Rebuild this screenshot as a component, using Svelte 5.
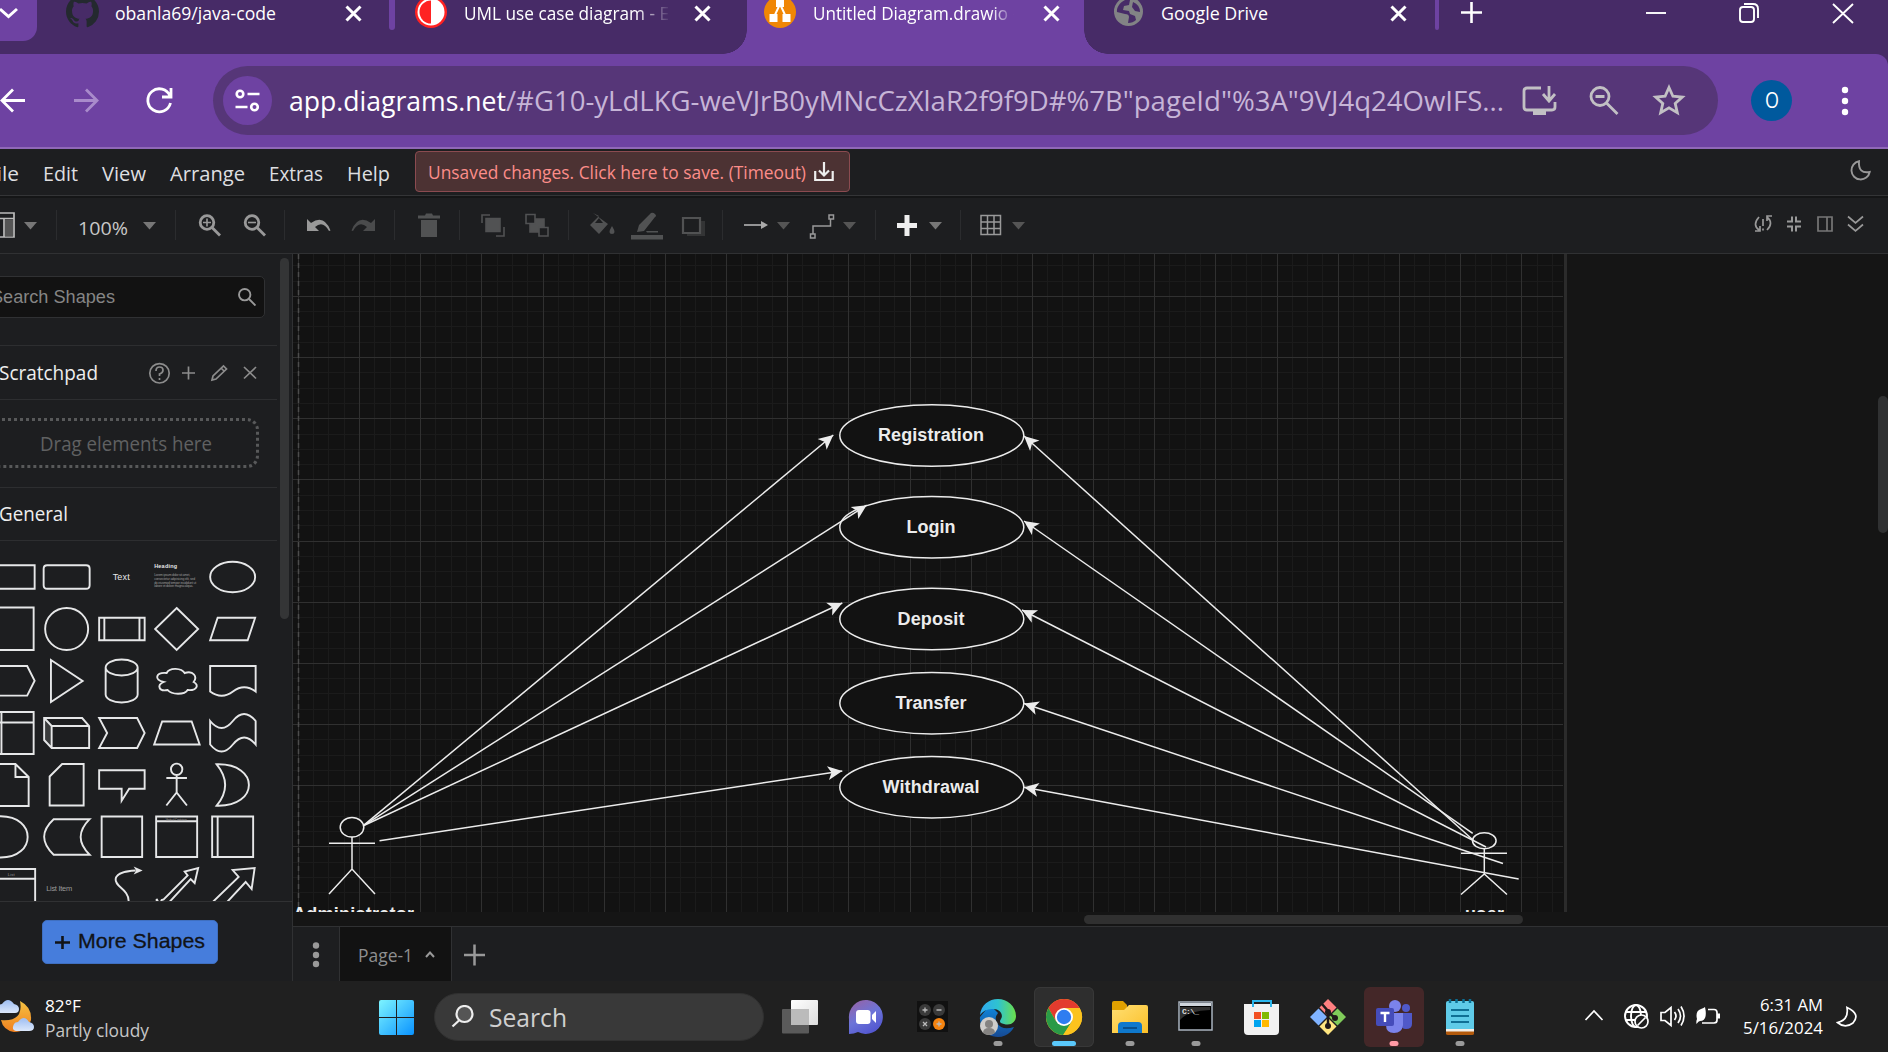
<script>
  const range = (start, end, step) => {
    const out = [];
    for (let v = start; v <= end; v += step) out.push(v);
    return out;
  };

  // Canvas grid: four minor cells per major cell
  const cell = 15.292;
  const columns = range(0, 82, 1)
    .map((i) => ({ at: Math.floor(298.35 + i * cell) + 0.5, major: i % 4 === 0 }))
    .filter((l) => l.at < 1563);
  const rows = range(0, 42, 1).map((i) => ({ at: Math.floor(296.2 - 3 * cell + 0.2 + i * cell) + 0.5, major: (i + 1) % 4 === 0 }));

  const useCases = [
    { name: 'Registration', y: 435.5, w: 106 },
    { name: 'Login', y: 527.3, w: 49 },
    { name: 'Deposit', y: 619, w: 67 },
    { name: 'Transfer', y: 703.2, w: 71 },
    { name: 'Withdrawal', y: 787.2, w: 97 },
  ];

  const edges = [
    [363.3, 825.7, 833.3, 435],
    [363.3, 825.7, 866.7, 505.2],
    [363.3, 825.7, 842.3, 603],
    [379.5, 840.7, 842.3, 771],
    [1473, 840, 1024, 436],
    [1472.7, 833.3, 1024, 521],
    [1486, 847, 1022, 610],
    [1503, 863.5, 1024, 703.5],
    [1518.7, 879, 1024, 787.3],
  ].map(([x1, y1, x2, y2]) => {
    const angle = (Math.atan2(y2 - y1, x2 - x1) * 180) / Math.PI;
    return { x1, y1, x2, y2, angle };
  });

  const menus = [
    ['File', 33],
    ['Edit', 35],
    ['View', 44],
    ['Arrange', 75],
    ['Extras', 54],
    ['Help', 43],
  ];

  // Palette outlines, each centred on its own cell
  const shapes = [
    ['M-23-11.7h46v23.4h-46z'],
    ['M-19.5-11.7h39q3.5 0 3.5 3.5v16.4q0 3.5-3.5 3.5h-39q-3.5 0-3.5-3.5v-16.4q0-3.5 3.5-3.5z'],
    ['', 'text'],
    ['', 'heading'],
    ['M-22.5 0a22.5 15.2 0 1 0 45 0a22.5 15.2 0 1 0-45 0z'],

    ['M-21.5-21.5h43.5v42.5h-43.5z'],
    ['M-21.5 0a21.5 21 0 1 0 43 0a21.5 21 0 1 0-43 0z'],
    ['M-22.5-11.3h45.5v22.6h-45.5zM-17.3-11.3v22.6M17.8-11.3v22.6'],
    ['M0-21L21.5 0L0 21L-21.5 0z'],
    ['M-15-11.3h37.5l-7.5 22.6h-37.5z'],

    ['M-23-15h38.5l7.5 14.8l-7.5 14.8h-38.5z'],
    ['M-15.7-21L16 0L-15.7 21z'],
    ['M-16-13.5a16 8 0 0 1 32 0v27a16 8 0 0 1-32 0zM-16-13.5a16 8 0 0 0 32 0'],
    ['M-10-8C-21-9-23-1-13 1C-20 4-18 11-9 9C-5 14 8 14 11 9C20 10 23 4 17 1C21-4 17-11 8-8C5-13-7-14-10-8z'],
    ['M-22.5-15h45.5v25.5q-11.5-8.5-22.7 0t-22.8 0z'],

    ['M-21.5-21h43.5v42h-43.5zM-21.5-10.5h43.5M-10.2-21v42'],
    ['M-22.5-15h38l7 8v22h-37.5l-7.5-8zM-22.5-15l7.5 8h37.5M-15-7v22', 'cube'],
    ['M-22.5-15h38l7.5 15l-7.5 15h-38l8-15z'],
    ['M-14.5-11.5h29.5l8 23h-45.5z'],
    ['M-22.5-12q11.5 14 22.7 0t22.8 0v23.5q-11.5-14-22.8 0t-22.7 0z'],

    ['M-19-21h22.8l13.2 13v29h-36zM3.8-21v13h13.2'],
    ['M-4.5-21h21.5v41.5h-34v-29z'],
    ['M-22.5-14.7h45.5v18.5h-15.5l-7.5 12v-12h-22.5z'],
    ['M-5.7-15.7a5.7 5.7 0 1 0 11.4 0a5.7 5.7 0 1 0-11.4 0zM0-10v17.5M-10.3-7h20.6M-10.3 20.5L0 7.5L10.3 20.5'],
    ['M-16-20.7C27-22 27 22-16 20.7Q1 0-16-20.7z'],

    ['M-19-20.7h8C25-20.7 25 20.5-11 20.5h-8z'],
    ['M-13-17.8h36q-18 18 0 35.5h-36q-19-18 0-35.5z'],
    ['M-20-20.5h40.5v40.5h-40.5z'],
    ['M-20.5-20.5h41v40.5h-41zM-20.5-15.7h41', 'band'],
    ['M-20.5-20.5h41v40.5h-41zM-15-20.5v40.5'],

    ['M-23-20h46.5v50h-46.5zM-23-10.2h46.5', 'list'],
    ['', 'item'],
    ['M7 12C7 0-7-2-6-10C-5-17 6-18 14-18.5', 'curve'],
    ['M-17 16l-3-6v13M-15 11l-5 12 13-4-3-3L14-10l4 4 3.5-15-13.5 3.5 3 4-24 24z'],
    ['M-22 15L6-12l-6-7 22-2-3 21-6-7-26 28'],
  ];
</script>

{#snippet label(text, width)}
  <svg class="label" {width}><text y="1em" textLength={width} lengthAdjust="spacingAndGlyphs">{text}</text></svg>
{/snippet}

{#snippet cross()}
  <svg class="cross" width="17" height="17" viewBox="0 0 17 17"><path d="M1.5 1.5L15.5 15.5M15.5 1.5L1.5 15.5" /></svg>
{/snippet}

{#snippet caret(x, bright)}
  <path class={bright ? 'caret bright' : 'caret'} d="M{x} 221h13l-6.5 7.5z" />
{/snippet}

<div class="screen">
  <header class="tabs">
    <div class="tab-menu">
      <svg width="37" height="41"><path d="M0 9l8.5 7.5L17 9" /></svg>
    </div>
    <div class="tab first">
      <svg class="fav" width="33" height="33" viewBox="0 0 16 16">
        <path fill="#24292f" d="M8 0C3.58 0 0 3.58 0 8c0 3.54 2.29 6.53 5.47 7.59.4.07.55-.17.55-.38 0-.19-.01-.82-.01-1.49-2.01.37-2.53-.49-2.69-.94-.09-.23-.48-.94-.82-1.13-.28-.15-.68-.52-.01-.53.63-.01 1.08.58 1.23.82.72 1.21 1.87.87 2.33.66.07-.52.28-.87.51-1.07-1.78-.2-3.64-.89-3.64-3.95 0-.87.31-1.59.82-2.15-.08-.2-.36-1.02.08-2.12 0 0 .67-.21 2.2.82.64-.18 1.32-.27 2-.27s1.36.09 2 .27c1.53-1.04 2.2-.82 2.2-.82.44 1.1.16 1.92.08 2.12.51.56.82 1.27.82 2.15 0 3.07-1.87 3.75-3.65 3.95.29.25.54.73.54 1.48 0 1.07-.01 1.93-.01 2.2 0 .21.15.46.55.38A8.01 8.01 0 0 0 16 8c0-4.42-3.58-8-8-8z" />
      </svg>
      {@render label('obanla69/java-code', 161)}
      {@render cross()}
    </div>
    <i class="divider wide"></i>
    <div class="tab second">
      <svg class="fav" width="32" height="32" viewBox="-16 -16 32 32">
        <circle r="16" fill="#f22" /><circle r="13.5" fill="#fff" /><path d="M0-11.5a11.5 11.5 0 0 0 0 23z" fill="#f22" />
      </svg>
      <span class="fade">{@render label('UML use case diagram - E', 205)}</span>
      {@render cross()}
    </div>
    <div class="tab active">
      <svg class="fav" width="32" height="32" viewBox="-16 -16 32 32">
        <circle r="16" fill="#f08705" />
        <path d="M0-8L-6 5M0-8L6 5" stroke="#fff" stroke-width="2" />
        <path d="M-4-13h8v8h-8zM-10.5 2h8v8h-8zM2.5 2h8v8h-8z" fill="#fff" />
      </svg>
      <span class="fade late">{@render label('Untitled Diagram.drawio -', 205)}</span>
      {@render cross()}
    </div>
    <div class="tab last">
      <svg class="fav" width="29" height="29" viewBox="0 0 29 29">
        <circle cx="14.5" cy="14.5" r="14.5" fill="#828385" />
        <path d="M11 3C5 6 2.5 11 3 15l8 2q4 0 4 3l-1 6q5 0 8-3l-1-4-5-2-1-3-6-1 1-4 5-1 1-5zM19 5l-1 5 3 4 5 1q0-7-7-10z" fill="#472b67" />
      </svg>
      {@render label('Google Drive', 107)}
      {@render cross()}
    </div>
    <i class="divider"></i>
    <svg class="plus" width="21" height="21"><path d="M10.5 0v21M0 10.5h21" /></svg>
    <svg class="window" width="220" height="41" viewBox="1636 0 220 41">
      <path d="M1646 13h20" />
      <rect x="1740" y="7" width="14" height="15" rx="3" />
      <path d="M1744 4h9q5 0 5 5v9" />
      <path d="M1833 4l20 19M1853 4l-20 19" />
    </svg>
  </header>

  <div class="address">
    <svg class="nav" width="213" height="93" viewBox="0 54 213 93">
      <path d="M25 100.5H2M13 89.5L2 100.5L13 111.5" />
      <path class="dim" d="M74 100.5h23M86 89.5l11 11-11 11" />
      <path d="M170 96a11.5 11.5 0 1 0 .5 7M171 88v9h-9" />
    </svg>
    <div class="omnibox">
      <svg class="site" width="49" height="49" viewBox="-24.5 -24.5 49 49">
        <circle r="24.5" fill="#6e42a2" />
        <g fill="none" stroke="#fff" stroke-width="2.6"><circle cx="-7.5" cy="-6.5" r="3.3" /><circle cx="7" cy="6.5" r="3.3" /><path d="M0-6.5h12M-12 6.5H0" /></g>
      </svg>
      <span class="host">{@render label('app.diagrams.net', 217)}</span>
      <span class="path">{@render label('/#G10-yLdLKG-weVJrB0yMNcCzXlaR2f9f9D#%7B"pageId"%3A"9VJ4q24OwIFS...', 998)}</span>
      <svg class="actions" width="196" height="69" viewBox="1522 66 196 69">
        <path d="M1541 88h-14q-3 0-3 3v16q0 3 3 3h25q3 0 3-3v-5M1549 86v14M1543 94l6 7 6-7" />
        <path class="solid" d="M1533 109h13v6h-13z" />
        <circle cx="1600" cy="96.5" r="9" /><path d="M1595.5 96.5h9M1606.5 103l11 11" />
        <path d="M1669 87.5l3.9 8.7 9.4.9-7.1 6.3 2.1 9.3-8.3-4.9-8.3 4.9 2.1-9.3-7.1-6.3 9.4-.9z" />
      </svg>
    </div>
    <div class="avatar">{@render label('O', 14)}</div>
    <svg class="dots" width="8" height="30"><circle cx="4" cy="4" r="3.2" /><circle cx="4" cy="15" r="3.2" /><circle cx="4" cy="26" r="3.2" /></svg>
  </div>

  <nav class="menubar">
    {#each menus as [name, width]}
      {@render label(name, width)}
    {/each}
    <button class="unsaved">
      {@render label('Unsaved changes. Click here to save. (Timeout)', 378)}
      <svg width="20" height="20"><path d="M1.2 9v9h17.5V9M10 0v13M5 8.5l5 5 5-5" /></svg>
    </button>
    <svg class="moon" width="21" height="21"><path d="M9 1.2A9.2 9.2 0 1 0 19.7 12Q8 14 9 1.2z" /></svg>
  </nav>

  <div class="toolbar">
    <svg width="56" height="30" viewBox="0 209 56 30">
      <path d="M-12 212h26v24h-26zM-12 217.500h26M4 217.500v19" stroke="#bbb" /><path d="M5 218.500h8v17h-8z" fill="#555" />{@render caret(24, true)}
    </svg>
    <div class="zoom">
      {@render label('100%', 50)}
      <svg width="14" height="30" viewBox="144 209 14 30">{@render caret(144, true)}</svg>
    </div>
    <svg width="108" height="30" viewBox="176 209 108 30">
      <g stroke="#999" stroke-width="2.8"><circle cx="207" cy="221.5" r="6.8" /><path d="M212 226.5l8 8" /><path d="M203 221.5h8M207 217.5v8" stroke-width="1.6" />
      <circle cx="252" cy="221.5" r="6.8" /><path d="M257 226.5l8 8" /><path d="M248 221.5h8" stroke-width="1.6" /></g>
    </svg>
    <svg width="109" height="30" viewBox="285 209 109 30">
      <path d="M307 218v12h12l-4-4q8-7 14 4l1.5-.5Q324 213 311 222z" fill="#999" /><path d="M375 218v12h-12l4-4q-8-7-14 4l-1.500-.5Q358 213 371 222z" fill="#4a4b4c" />
    </svg>
    <svg width="64" height="30" viewBox="395 209 64 30"><path d="M418 214.5h7l1-2h6l1 2h7v3h-22zM421 219h16v17h-16z" fill="#515253" /></svg>
    <svg width="108" height="30" viewBox="460 209 108 30">
      <g stroke="#515253" stroke-width="1.6"><path d="M482 222v-8h8M504 226v9h-8" /><path d="M486 217.5h14v13h-14z" fill="#515253" />
      <path d="M530 218h14v13h-14z" fill="#515253" /><path d="M526 213.5h9v9h-9zM539 226.5h9v8.5h-9z" fill="#1d1e20" /></g>
    </svg>
    <svg width="153" height="30" viewBox="569 209 153 30">
      <path d="M593 212l15 11-9 10-9-9 9-9zM612 225q5 8 0 8t0-8z" fill="#515253" /><path d="M595 222l4-5 4 5z" fill="#1d1e20" />
      <path d="M637 231l2-7 12-12q2-1 4 1t0 3l-11 14zM631 234h32v4.5h-32zM646 230h12v1.5h-11z" fill="#515253" />
      <path d="M687 220h18v15h-18z" fill="#333435" /><path d="M683 217h17v15h-17z" stroke="#515253" stroke-width="2.2" fill="#1d1e20" />
    </svg>
    <svg width="152" height="30" viewBox="723 209 152 30">
      <path d="M744 224h17" stroke="#aaa" /><path d="M761 220l7 4-7 4z" fill="#aaa" />{@render caret(777)}
      <path d="M813 233v-8h17.5v-7M810.5 233h4.5v4h-4.5zM829 214h4.5v4h-4.5z" stroke="#999" stroke-width="1.5" />{@render caret(843)}
    </svg>
    <svg width="84" height="30" viewBox="876 209 84 30"><path d="M907 214v21M897 224.5h20" stroke="#eee" stroke-width="5" />{@render caret(929, true)}</svg>
    <svg class="open" width="80" height="30" viewBox="961 209 80 30"><path d="M981 214.5h19.5v19h-19.5zM987.5 214v20M994 214v20M981 221h20M981 227.5h20" stroke="#999" stroke-width="1.5" />{@render caret(1012)}</svg>
    <svg class="open panels" width="120" height="30" viewBox="1750 209 120 30">
      <g stroke="#999" stroke-width="1.7">
        <path d="M1759 216q-7 8 0 13M1755 230h5v-5M1767 229q7-7 0-13M1772 215h-5v5M1763 218v7M1763 227.5v2" />
        <path d="M1787 220.5h5v-5M1801 220.5h-5v-5M1787 225.5h5v5M1801 225.5h-5v5" stroke-width="2" />
        <path d="M1818 216h14v14h-14zM1827 216v14" stroke="#777" />
        <path d="M1848 215.5l7.5 6.5 7.5-6.5M1848 223.5l7.5 6.5 7.5-6.5" />
      </g>
    </svg>
  </div>

  <main>
    <aside>
      <div class="sections">
        <div class="search-row">
          <div class="search-box">
            {@render label('Search Shapes', 124)}
            <svg width="18" height="18"><circle cx="6.7" cy="6.7" r="5.7" /><path d="M11 11l6.5 6.5" /></svg>
          </div>
        </div>
        <div class="heading">
          {@render label('Scratchpad', 99)}
          <svg class="tools" width="110" height="24" viewBox="148 361 110 24">
            <circle cx="159.5" cy="373.3" r="9.7" /><path d="M156 371q0-4 3.5-4t3.5 3-3.5 4v2M159.5 378v2" />
            <path d="M182 373h13M188.5 366.5v13" />
            <path d="M212 380l1-4 10.500-10 3 3-10.500 10zM221 368l3 3" />
            <path d="M244 367l12 11.5M256 367l-12 11.5" />
          </svg>
        </div>
        <div class="drop-row"><div class="drop">{@render label('Drag elements here', 172)}</div></div>
        <div class="heading general">{@render label('General', 69)}</div>
        <div class="palette">
          {#each shapes as [d, kind]}
            <svg viewBox="-27.5 -26 55 52">
              {#if kind === 'cube'}<path class="shade" d="M-22.5-15l7.5 8v22l-7.5-8z" />{/if}
              {#if d}<path {d} />{/if}
              {#if kind === 'text'}<text x="-9" y="3" font-size="9" textLength="17">Text</text>{/if}
              {#if kind === 'heading'}
                <text class="bold" x="-22.5" y="-9" font-size="5.5" textLength="23">Heading</text>
                <g class="faint" font-size="3.4">
                  <text x="-22.5" y="-1" textLength="36">Lorem ipsum dolor sit amet,</text>
                  <text x="-22.5" y="2.8" textLength="41">consectetur adipisicing elit, sed</text>
                  <text x="-22.5" y="6.6" textLength="42">do eiusmod tempor incididunt ut</text>
                  <text x="-22.5" y="10.4" textLength="39">labore et dolore magna aliqua.</text>
                </g>
              {/if}
              {#if kind === 'band'}<text class="faint" x="-11" y="-16.5" font-size="3" textLength="21">Vertical Container</text>{/if}
              {#if kind === 'list'}<text class="faint" x="-4" y="-13.5" font-size="4" textLength="7">List</text>{/if}
              {#if kind === 'item'}<text class="faint" x="-20.5" y="2" font-size="7.5" textLength="26">List Item</text>{/if}
              {#if kind === 'curve'}<path class="tip" d="M21-18.5l-9-4 2.5 4-2.5 4z" />{/if}
            </svg>
          {/each}
        </div>
        <i class="thumb"></i>
      </div>
      <div class="more">
        <button><svg width="15" height="15"><path d="M7.5 1v13M0 7.5h15" /></svg>{@render label('More Shapes', 127)}</button>
      </div>
    </aside>

    <section class="workspace">
      <svg class="canvas" width="1595" height="658" viewBox="293 254 1595 658">
        <rect x="293" y="254" width="1271" height="658" fill="#121212" />
        {#each columns.filter((l) => !l.major) as l}<path class="minor" d="M{l.at} 254V912" />{/each}
        {#each rows.filter((l) => !l.major) as l}<path class="minor" d="M293 {l.at}H1563" />{/each}
        {#each columns.filter((l) => l.major) as l}<path class="major" d="M{l.at} 254V912" />{/each}
        {#each rows.filter((l) => l.major) as l}<path class="major" d="M293 {l.at}H1563" />{/each}
        <path class="break" d="M298.5 254V912" />
        <rect x="1564" y="254" width="3" height="658" fill="#2b2b2b" />

        {#each useCases as u}
          <ellipse class="ink" cx="931.8" cy={u.y} rx="92" ry="30.7" fill="#121212" />
          <text x={931 - u.w / 2} y={u.y + 5.6} textLength={u.w}>{u.name}</text>
        {/each}
        {#each edges as e}
          <path class="ink" d="M{e.x1} {e.y1}L{e.x2} {e.y2}" />
          <path class="tip" transform="translate({e.x2} {e.y2}) rotate({e.angle})" d="M0 0l-14.5-7 3.6 7-3.6 7z" />
        {/each}

        <ellipse class="ink" cx="352" cy="827.3" rx="11.8" ry="9.8" fill="#121212" />
        <path class="ink" d="M352 837v32M329 843.3h46M329 894l23-25 23 25" />
        <text x="293" y="919.6" textLength="121">Administrator</text>
        <ellipse class="ink" cx="1484.3" cy="840.7" rx="11.8" ry="8" />
        <path class="ink" d="M1484.3 849v25M1461 853.3h46M1461 894.5l23.3-20.5 22.7 20.5" />
        <text x="1465" y="920.4" textLength="39">user</text>
      </svg>
      <div class="hscroll"><i></i></div>
      <footer>
        <svg width="46" height="54"><g fill="#999"><circle cx="23" cy="18.500" r="3.2" /><circle cx="23" cy="28" r="3.2" /><circle cx="23" cy="37" r="3.2" /></g></svg>
        <div class="page">
          {@render label('Page-1', 55)}
          <svg width="10" height="8"><path d="M1 7l4-4.5L9 7" /></svg>
        </div>
        <svg width="46" height="54"><path d="M12 28h21M22.5 17.5v21" stroke="#999" stroke-width="2.5" /></svg>
      </footer>
      <i class="vscroll"></i>
    </section>
  </main>

  <div class="taskbar">
    <svg width="45" height="60" viewBox="0 987 45 60">
      <defs>
        <linearGradient id="moon" x2="0" y2="1"><stop stop-color="#f5c242" /><stop offset="1" stop-color="#f08020" /></linearGradient>
        <linearGradient id="cloud" x2="0" y2="1"><stop stop-color="#9dbdf2" /><stop offset="1" stop-color="#dce8fb" /></linearGradient>
      </defs>
      <path d="M20 1001Q32 1007 31 1020Q27 1032 14 1032Q3 1030 1 1020Q24 1022 20 1001z" fill="url(#moon)" />
      <path d="M-2 1013q-3-8 4-9 6-8 12 0 5 1 5 5t-4 4z" fill="url(#cloud)" />
      <path d="M16 1031q-5-1-2-7 1-2 4-2 6-8 11 0 5 1 5 5t-5 4z" fill="url(#cloud)" />
    </svg>
    <div class="weather">
      <span class="temp">{@render label('82°F', 36)}</span>
      <span class="sky">{@render label('Partly cloudy', 104)}</span>
    </div>
    <svg class="start" width="35" height="35">
      <defs><linearGradient id="win" gradientUnits="userSpaceOnUse" x1="0" y1="0" x2="35" y2="35"><stop stop-color="#7df4ff" /><stop offset="1" stop-color="#0a93ff" /></linearGradient></defs>
      <path d="M2 0h15v17H0V2q0-2 2-2zM18 0h15q2 0 2 2v15H18zM0 18h17v17H2q-2 0-2-2zM18 18h17v15q0 2-2 2H18z" fill="url(#win)" />
    </svg>
    <div class="find">
      <svg width="24" height="24"><circle cx="14.5" cy="9" r="8" fill="#555" /><path d="M9 15.5l-6.5 6" /></svg>
      {@render label('Search', 78)}
    </div>
    <div class="apps">
      <svg viewBox="-30 -30 60 60">
        <defs><linearGradient id="sheet" x2="1" y2="1"><stop stop-color="#fff" /><stop offset="1" stop-color="#ddd" /></linearGradient></defs>
        <rect x="-9" y="-17" width="27" height="25" rx="1" fill="url(#sheet)" /><rect x="-18" y="-8" width="27" height="24.5" rx="1" fill="#5a5a5a" /><path d="M-9-8H9V8H-9z" fill="#bbb" />
      </svg>
      <svg viewBox="-30 -30 60 60">
        <defs><linearGradient id="chat" x1="0.1" y1="0.1" x2="0.6" y2="1"><stop stop-color="#9165ac" /><stop offset=".5" stop-color="#6c74d8" /><stop offset="1" stop-color="#5357d0" /></linearGradient></defs>
        <path d="M-17 17V2A17 17 0 1 1-8 15q-4 2-9 2z" fill="url(#chat)" /><rect x="-10" y="-7" width="14.5" height="14" rx="3" fill="#fff" /><path d="M6-2l4-4v12l-4-4z" fill="#fff" />
      </svg>
      <svg viewBox="-30 -30 60 60">
        <path d="M-15-16h31v31h-31z" fill="#111" /><g fill="#3a3a3a"><circle cx="-7" cy="-7" r="6" /><circle cx="7" cy="-7" r="6" /><circle cx="-7" cy="7" r="6" /></g><circle cx="7" cy="7" r="6" fill="#f68410" />
        <path d="M-9.5-7h5M-7-9.5v5M4.5-7h5M-9 5l4 4M-5 5l-4 4M4.5 7h5M7 4.5v5" stroke="#bbb" stroke-width="1.3" />
      </svg>
      <svg viewBox="-30 -30 60 60">
        <defs>
          <linearGradient id="edgeTop"><stop stop-color="#2fa8f0" /><stop offset=".5" stop-color="#2fc3d0" /><stop offset="1" stop-color="#6be04a" /></linearGradient>
          <linearGradient id="edgeLow" x2="0" y2="1"><stop stop-color="#0f8ae0" /><stop offset="1" stop-color="#164a94" /></linearGradient>
        </defs>
        <path d="M-18 0A18 18 0 0 0 16 10Q4 14-1 6-4 1 0-4L-8-12z" fill="url(#edgeLow)" />
        <path d="M-18-2C-17-12-9-18 0-18S18-11 18-1C18 5 13 9 6 7Q0 6 3 2C6-3 1-8-4-8Q-13-9-18-2z" fill="url(#edgeTop)" />
        <circle cx="-9" cy="9" r="9" fill="#cfcdca" /><circle cx="-9" cy="7" r="4" fill="#858381" /><path d="M-15 16q0-5 6-5t6 5q-6 4-12 0z" fill="#858381" />
        <rect class="pill" x="-4.5" y="24" width="9" height="5" rx="2.5" />
      </svg>
      <svg class="current" viewBox="-30 -30 60 60">
        <circle r="18" fill="#fcc31e" /><path d="M-15.6-9A18 18 0 0 1 15.6-9H0L-7.8 4.5z" fill="#e33b2e" /><path d="M-15.6-9A18 18 0 0 0-1 18L8 4.5H-7.8z" fill="#2a9a47" /><path d="M0-9h15.6A18 18 0 0 1-.5 18L8 4z" fill="#fcc31e" />
        <circle r="9" fill="#fff" /><circle r="7.2" fill="#2f7df0" /><rect x="-12" y="24" width="24" height="5" rx="2.5" fill="#5ac8fa" />
      </svg>
      <svg viewBox="-30 -30 60 60">
        <defs><linearGradient id="folder" x2="1" y2="1"><stop stop-color="#ffdf73" /><stop offset="1" stop-color="#fcbf27" /></linearGradient></defs>
        <path d="M-18-14q0-2 2-2h9l4 4H-3V0h-15z" fill="#e0a000" /><path d="M-18-7h12l5-5h17q2 0 2 2v26h-36z" fill="url(#folder)" />
        <path d="M-12 16V9q0-4 4-4H8q4 0 4 4v7z" fill="#0f78cc" /><path d="M-7 11H7" stroke="#084f8c" stroke-width="2" /><rect class="pill" x="-4.5" y="24" width="9" height="5" rx="2.5" />
      </svg>
      <svg viewBox="-30 -30 60 60">
        <path d="M-17-15h33v28h-33z" fill="#000" stroke="#a9b3bf" stroke-width="1.5" /><path d="M-16-14h31v3h-31z" fill="#cfd5dc" /><path d="M-16-10h30v3q-23 1-30 10z" fill="#303030" /><text x="-14" y="-3.5" textLength="17">C:\_</text>
        <rect class="pill" x="-4.5" y="24" width="9" height="5" rx="2.5" />
      </svg>
      <svg viewBox="-30 -30 60 60">
        <path d="M-9-8v-8H9v8" fill="none" stroke="#2bb7ee" stroke-width="2" /><path d="M-18-13h35v27q0 4-4 4h-27q-4 0-4-4z" fill="#f1f1f1" /><path d="M-9-13v3M9-13v3" stroke="#2bb7ee" stroke-width="2" />
        <path d="M-8-5h7v7h-7z" fill="#f25022" /><path d="M0-5h7v7H0z" fill="#7fba00" /><path d="M-8 3h7v7h-7z" fill="#00a4ef" /><path d="M0 3h7v7H0z" fill="#ffb900" />
      </svg>
      <svg viewBox="-30 -30 60 60">
        <path d="M0-18l8.500 8.500L0-1l-8.500-8.500z" fill="#ff8080" /><path d="M9.500-8.500L18 0 9.500 8.500 1 0z" fill="#80cc5a" /><path d="M0 1l8.500 8.500L0 18l-8.500-8.500z" fill="#ffe680" /><path d="M-9.500-8.500L-1 0l-8.500 8.500L-18 0z" fill="#80b3ff" />
        <path d="M-6-13L0-6v15M0-5l7 6" stroke="#201a1a" stroke-width="2.5" /><g fill="#201a1a"><circle cy="-5" r="3" /><circle cy="9" r="3" /><circle cx="7" cy="1" r="3" /></g>
      </svg>
      <svg class="alert" viewBox="-30 -30 60 60">
        <circle cx="12" cy="-9" r="4" fill="#5059c9" /><path d="M7-4h11v11q0 5-6 5-5 0-5-5z" fill="#5059c9" /><circle cx="1" cy="-11" r="6" fill="#7b83eb" /><path d="M-7-4H9V8Q8 16 0 16T-8 8z" fill="#7b83eb" />
        <rect x="-18" y="-9" width="18" height="18" rx="2" fill="#454cba" /><path d="M-13.5-4h9M-9-4v9" stroke="#fff" stroke-width="2.4" /><rect x="-4.5" y="24" width="9" height="5" rx="2.5" fill="#ff9aa5" />
      </svg>
      <svg viewBox="-30 -30 60 60">
        <path d="M-14-14q0-2 2-2h24q2 0 2 2v27h-28z" fill="#5fcbe8" /><path d="M-14 12h28v3h-28z" fill="#f4efe8" /><path d="M-14 14.5h28v2q0 1.5-2 1.5h-24q-2 0-2-1.5z" fill="#b35a0c" />
        <path d="M-10-18v4M-3.5-18v4M3.5-18v4M10-18v4" stroke="#0b6f95" stroke-width="2.5" /><path d="M-9-7H9M-9-1H9M-9 5H9" stroke="#0f6f94" stroke-width="1.8" /><rect class="pill" x="-4.5" y="24" width="9" height="5" rx="2.5" />
      </svg>
    </div>
    <svg class="tray" width="140" height="60" viewBox="1582 987 140 60">
      <path d="M1585.5 1020l8.5-9 8.5 9" />
      <g stroke-width="1.9"><circle cx="1636" cy="1016" r="11" /><ellipse cx="1636" cy="1016" rx="5" ry="11" /><path d="M1625.5 1012h21M1625.5 1020h21" /></g>
      <circle cx="1641.5" cy="1021.5" r="6.5" fill="#202020" /><path d="M1637.5 1025.5l8-8" />
      <path d="M1661 1012.5h4l6-5v18l-6-5h-4zM1674.5 1012q3 4 0 8M1678 1009q5 7 0 14M1681 1006.5q6 9.5 0 19" />
      <path d="M1708 1009.500h6q3 0 3 3v7.500q0 3-3 3h-12" /><path class="solid" d="M1717 1013.500h3v5h-3zM1705 1007q3 14-5 14-1.500 0-3.500 3-.5-3 .5-5-2-8 4-10 3-1 4-2z" />
    </svg>
    <div class="clock">{@render label('6:31 AM', 63)}{@render label('5/16/2024', 80)}</div>
    <svg class="tray dnd" width="22" height="22"><path d="M11 1.5Q25 8 17 17 9 23 1.5 16.5 13 14 11 1.5z" /></svg>
  </div>
</div>

<style>
  :global(body) { margin: 0; background: #1d1e20; overflow: hidden; }
  .screen { width: 1888px; height: 1052px; display: flex; flex-direction: column; overflow: hidden; font-family: 'Open Sans', 'Noto Sans', sans-serif; color: #e0e0e0; }
  svg { display: block; flex: none; fill: none; }
  button { font: inherit; padding: 0; }
  .label { height: 1.3em; overflow: visible; fill: currentColor; }
  span { display: block; }

  .tabs { height: 54px; flex: none; display: flex; align-items: flex-start; background: #472b67; color: #fff; font-size: 17.5px; }
  .tab-menu { width: 37px; height: 41px; background: #6e42a2; border-radius: 0 0 14px 0; }
  .tab-menu path { stroke: #fff; stroke-width: 3; }
  .tab { height: 26px; display: flex; align-items: center; box-sizing: border-box; }
  .tab .fav { margin-top: -3px; }
  .tab .cross { margin-left: auto; }
  .cross path { stroke: #fff; stroke-width: 3; }
  .first { width: 352px; padding: 0 27px 0 29px; gap: 16px; }
  .second { width: 352px; padding: 0 36px 0 20px; gap: 17px; }
  .active { width: 337px; height: 54px; padding: 0 24px 28px 17px; gap: 17px; background: #6e42a2; position: relative; }
  .active::before, .active::after { content: ''; position: absolute; bottom: 0; width: 24px; height: 24px; }
  .active::before { right: 100%; background: radial-gradient(circle at 0 0, transparent 23.5px, #6e42a2 24px); }
  .active::after { left: 100%; background: radial-gradient(circle at 100% 0, transparent 23.5px, #6e42a2 24px); }
  .last { width: 351px; padding: 0 28px 0 30px; gap: 18px; }
  .fade { mask-image: linear-gradient(90deg, #000 84%, transparent 101%); }
  .late { mask-image: linear-gradient(90deg, #000 87%, transparent 98%); }
  .divider { width: 4px; height: 30px; border-radius: 0 0 3px 3px; background: #6e42a2; }
  .divider.wide { width: 6px; }
  .plus { margin: 2px 0 0 22px; }
  .plus path { stroke: #fff; stroke-width: 2.6; }
  .window { margin-left: 154px; stroke: #fff; stroke-width: 1.9; }

  .address { height: 93px; flex: none; display: flex; align-items: center; background: #6e42a2; border-bottom: 2px solid #9068b8; border-radius: 0 12px 0 0; box-shadow: 12px -12px 0 #472b67; }
  .nav { stroke: #fff; stroke-width: 2.8; }
  .nav .dim { stroke: #a98bcb; }
  .omnibox { width: 1505px; height: 69px; box-sizing: border-box; padding-left: 10px; display: flex; align-items: center; border-radius: 35px; background: #563678; font-size: 27.5px; }
  .host { margin-left: 17px; color: #fff; }
  .path { color: #c6b5d7; }
  .actions { margin-left: auto; stroke: #c2c0c4; stroke-width: 2.8; }
  .solid { fill: currentColor; stroke: none; }
  .actions .solid { fill: #c2c0c4; }
  .avatar { width: 41px; height: 41px; margin-left: 33px; border-radius: 50%; background: #00599d; color: #fff; display: grid; place-items: center; font-size: 21px; }
  .dots { margin-left: 49px; fill: #fff; }

  .menubar { height: 47px; flex: none; display: flex; align-items: center; gap: 24px; margin-left: -14px; box-sizing: border-box; border-bottom: 1px solid #343537; color: #dedfe0; font-size: 19.5px; background: #1d1e20; }
  .menubar > .label { margin-top: 3px; }
  .unsaved { width: 435px; height: 41px; box-sizing: border-box; display: flex; align-items: center; gap: 8px; padding-left: 13px; margin: -1px 0 0 1px; border: 1px solid #8b4b50; border-radius: 4px; background: #4c3233; color: #fc8d8a; font-size: 17.5px; }
  .unsaved .label { margin-top: 2px; margin-left: -1px; }
  .unsaved path { stroke: #eee; stroke-width: 2.2; }
  .moon { margin: -3px 17px 0 auto; stroke: #999; stroke-width: 1.9; }

  .toolbar { height: 58px; flex: none; display: flex; align-items: center; box-sizing: border-box; border-top: 2px solid #151617; border-bottom: 1px solid #303133; background: #1d1e20; color: #c8c8c8; font-size: 19px; }
  .toolbar > svg, .zoom { border-right: 1px solid #2b2c2e; margin-top: -2px; }
  .toolbar > .open { border: 0; }
  .toolbar svg { stroke-width: 1.7; overflow: visible; }
  .toolbar > svg:first-child { overflow: hidden; }
  .zoom { width: 119px; height: 30px; display: flex; align-items: center; gap: 15px; padding-left: 21px; box-sizing: border-box; }
  .zoom .label { margin-top: 8px; }
  .caret { fill: #555; }
  .caret.bright { fill: #777; }
  .panels { margin-left: auto; margin-right: 18px; }

  main { flex: 1; display: flex; min-height: 0; }
  aside { width: 292px; flex: none; display: flex; flex-direction: column; border-right: 1px solid #303133; background: #1d1e20; font-size: 19.5px; color: #eee; }
  .sections { height: 647px; overflow: hidden; position: relative; border-bottom: 1px solid #303133; }
  .search-row, .heading, .drop-row { width: 277px; box-sizing: border-box; border-bottom: 1px solid #2d2e30; }
  .search-row { height: 92px; padding-top: 22px; }
  .search-box { width: 279px; height: 42px; box-sizing: border-box; margin-left: -14px; padding: 0 8px 0 4px; display: flex; align-items: center; justify-content: space-between; border: 1px solid #303133; border-radius: 5px; background: #121212; font: 17.5px 'Liberation Sans', sans-serif; color: #858585; }
  .search-box .label { margin-top: -2px; }
  .search-box svg:last-child { stroke: #999; stroke-width: 1.9; }
  .heading { height: 54px; display: flex; align-items: center; font-weight: 500; }
  .heading .label { margin-left: -1px; }
  .heading.general { height: 53px; }
  .tools { margin-left: 50px; stroke: #8c8c8c; stroke-width: 1.7; }
  .drop-row { height: 88px; padding-top: 18px; }
  .drop { width: 281px; height: 50px; box-sizing: border-box; margin-left: -22px; display: flex; align-items: center; padding: 2px 0 0 59px; border: 3px dotted #58595a; border-radius: 12px; color: #606162; }
  .palette { display: grid; grid-template-columns: repeat(5, 55.3px); margin: 10px 0 0 -16.5px; }
  .palette svg { width: 55.3px; height: 52px; overflow: visible; stroke: #e6e7e8; stroke-width: 1.9; }
  .palette text { stroke: none; fill: #e6e7e8; font-family: 'Liberation Sans', sans-serif; }
  .palette .faint, .palette .faint text { fill: #999; }
  .palette .bold { font-weight: bold; }
  .palette .shade { fill: #3a3b3c; stroke: none; }
  .palette .tip { fill: #e6e7e8; stroke: none; }
  .thumb { position: absolute; right: 3px; top: 4px; width: 9px; height: 361px; border-radius: 5px; background: #343536; }
  .more { flex: 1; padding: 18px 0 0 42px; }
  .more button { width: 176px; height: 44px; display: flex; align-items: center; gap: 8px; padding: 0 0 0 12px; border: 1px solid #3f6fc0; box-sizing: border-box; border-radius: 5px; background: #467ddc; color: #111317; font: 500 20.5px 'Liberation Sans', sans-serif; }
  .more button .label { stroke: #111317; stroke-width: .3; margin-top: -4px; }
  .more path { stroke: #111317; stroke-width: 2.6; }

  .workspace { flex: 1; position: relative; background: #151515; }
  .canvas text { font: bold 18px 'Liberation Sans', sans-serif; fill: #ececec; }
  .canvas .tip { fill: #ececec; }
  .minor { stroke: #1b1b1b; }
  .major { stroke: #303030; }
  .break { stroke: #4c4c4c; stroke-width: 1.5; stroke-dasharray: 5 4; }
  .ink { stroke: #ececec; stroke-width: 1.5; }
  .hscroll { height: 15px; padding-top: 1px; border-bottom: 1px solid #303133; box-sizing: border-box; }
  .hscroll i { display: block; width: 439px; height: 9px; margin: 2px 0 0 791px; border-radius: 5px; background: #303030; }
  .vscroll { position: absolute; right: 0; top: 142px; width: 10px; height: 137px; border-radius: 5px; background: #303132; }
  footer { height: 54px; display: flex; background: #1d1e20; }
  .page { width: 113px; box-sizing: border-box; border: solid #303133; border-width: 0 1px; display: flex; align-items: center; gap: 12px; padding: 3px 0 0 18px; background: #121212; color: #8e8f90; font-size: 17.5px; font-weight: 500; }
  .page path { stroke: #999; stroke-width: 2; }
  .page > svg:last-child { margin-top: -4px; }

  .taskbar { height: 71px; flex: none; display: flex; align-items: center; background: #202020; color: #fff; }
  .weather { width: 334px; display: flex; flex-direction: column; gap: 2px; padding-top: 3px; font-size: 17px; }
  .sky { color: #c6c6c6; font-size: 17.5px; }
  .start { margin-right: 20px; margin-top: 2px; }
  .find { width: 330px; height: 48px; box-sizing: border-box; display: flex; align-items: center; gap: 15px; padding-left: 15px; margin-top: 1px; border: 1px solid #303030; border-radius: 24px; background: #393939; color: #d0d0d0; font-size: 25px; }
  .find .label { margin-top: 2px; }
  .find svg:first-child { stroke: #eee; stroke-width: 2.2; }
  .apps { display: flex; gap: 6px; margin-left: 6px; margin-top: 1px; }
  .apps > svg { width: 60px; height: 60px; border-radius: 6px; }
  .apps text { font: bold 8px 'Liberation Mono', monospace; fill: #ddd; }
  .current { background: #2e2e2e; box-shadow: inset 0 0 0 1px #383838; }
  .alert { background: #442728; }
  .pill { fill: #9a9a9a; }
  .tray { margin-left: 92px; stroke: #fff; stroke-width: 1.7; }
  .clock { width: 101px; display: flex; flex-direction: column; align-items: flex-end; font-size: 17px; gap: 1px; }
  .dnd { margin-left: 13px; }
</style>
